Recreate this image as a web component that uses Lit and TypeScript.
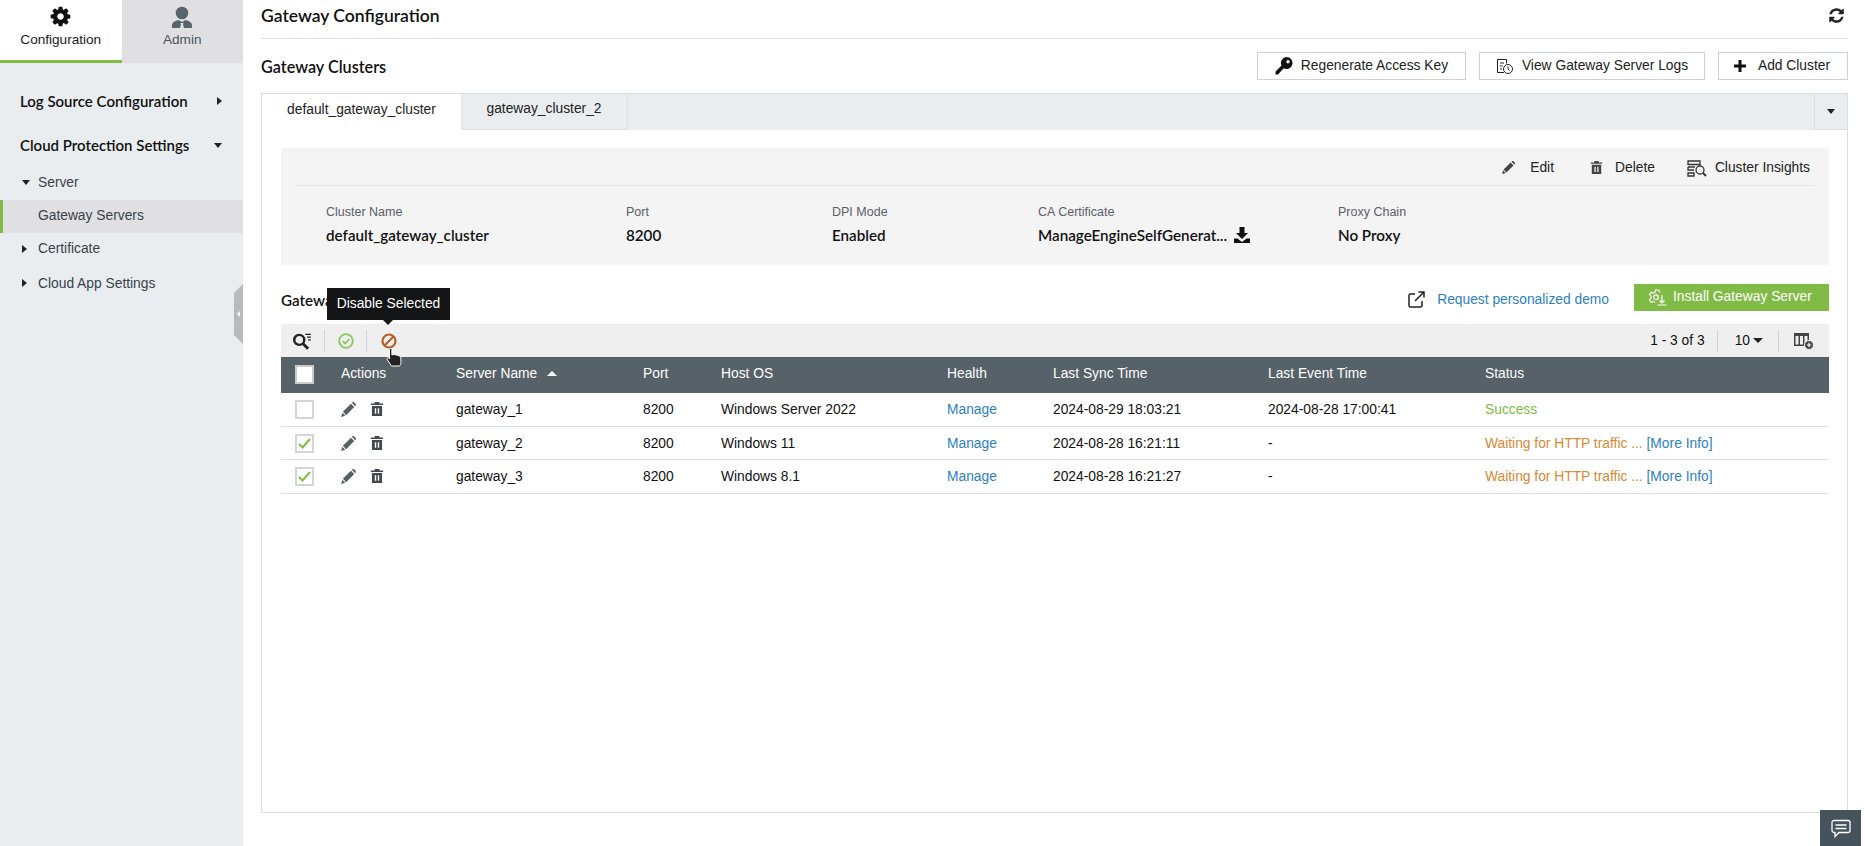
import { LitElement, html, css, svg } from "lit";
import { customElement } from "lit/decorators.js";

const cog = "M1152 896q0-106-75-181t-181-75-181 75-75 181 75 181 181 75 181-75 75-181zm512-109v222q0 12-8 23t-20 13l-185 28q-19 54-39 91 35 50 107 138 10 12 10 25t-9 23q-27 37-99 108t-94 71q-12 0-26-9l-138-108q-44 23-91 38-16 136-29 186-7 28-36 28h-222q-14 0-24.5-8.5t-11.5-21.5l-28-184q-49-16-90-37l-141 107q-10 9-25 9-14 0-25-11-126-114-165-168-7-10-7-23 0-12 8-23 15-21 51-66.5t54-70.5q-27-50-41-99l-183-27q-13-2-21-12.5t-8-23.5v-222q0-12 8-23t19-13l186-28q14-46 39-92-40-57-107-138-10-12-10-24 0-10 9-23 26-36 98.5-107.5t94.5-71.5q13 0 26 10l138 107q44-23 91-38 16-136 29-186 7-28 36-28h222q14 0 24.5 8.5t11.5 21.5l28 184q49 16 90 37l142-107q9-9 24-9 13 0 25 10 129 119 165 170 7 8 7 22 0 12-8 23-15 21-51 66.5t-54 70.5q26 50 41 98l183 28q13 2 21 12.5t8 23.5z";
const refresh = "M1639 1056q0 5-1 7-64 268-268 434.5t-478 166.5q-146 0-282.5-55t-243.5-157l-129 129q-19 19-45 19t-45-19-19-45v-448q0-26 19-45t45-19h448q26 0 45 19t19 45-19 45l-137 137q71 66 161 102t187 36q134 0 250-65t186-179q11-17 53-117 8-23 30-23h192q13 0 22.5 9.5t9.5 22.5zm25-800v448q0 26-19 45t-45 19h-448q-26 0-45-19t-19-45 19-45l138-138q-148-137-349-137-134 0-250 65t-186 179q-11 17-53 117-8 23-30 23h-199q-13 0-22.5-9.5t-9.5-22.5v-7q65-268 270-434.5t480-166.5q146 0 284 55.5t245 156.5l130-129q19-19 45-19t45 19 19 45z";

const pencil = (s: number, c: string) => svg`<svg width=${s} height=${s} viewBox="0 0 16 16" fill=${c}><path d="M10.6 1.9l3.5 3.5-8.6 8.6-3.5-3.5zM11.6.9l.9-.8a.9.9 0 0 1 1.2 0l2.2 2.2a.9.9 0 0 1 0 1.2l-.8.9zM1.3 11.4l3.3 3.3L.2 16z"/></svg>`;
const trash = (s: number, c: string) => svg`<svg width=${s} height=${s} viewBox="0 0 14 16" fill=${c}><path d="M4.6 0h4.8l.6 1.7H14v1.8H0V1.700h4zM1.200 4.600h11.600V16H1.200zM4.500 7v6.500h1.600V7zM7.900 7v6.500h1.600V7z" fill-rule="evenodd"/></svg>`;

@customElement("app-root")
export class AppRoot extends LitElement {
  static styles = css`
    :host { display: block; height: 846px; overflow: hidden; position: relative; background: #fff;
      font-family: "Liberation Sans", Arial, sans-serif; font-size: 13.800px; color: #111; }
    * { box-sizing: border-box; }
    .page { display: flex; height: 846px; }
    .side { width: 243px; flex: none; background: #eaedef; position: relative; }
    .toptabs { display: flex; height: 63px; }
    .toptab { width: 121.500px; background: #e0e0e2; color: #4a5560; display: flex; flex-direction: column; align-items: center; padding-top: 5px; font-size: 13.600px; }
    .toptab.on { background: #fff; color: #1b1b1b; border-bottom: 3px solid #80bb46; }
    .toptab svg { display: block; height: 23px; margin-bottom: 4px; }
    .menu { padding-top: 16px; color: #37424c; }
    .mh { font: 600 15px Lato, sans-serif; color: #111; height: 44px; display: flex; align-items: center; padding: 0 20px; justify-content: space-between; }
    .mh .car { margin-right: 1px; }
    .sub { height: 33px; display: flex; align-items: center; padding: 0 0 2px 22px; gap: 8px; }
    .sub.last { height: 34px; padding-bottom: 0; }
    .sub.act { padding-left: 35px; background: #e0e0e2; border-left: 3px solid #80bb46; }
    .tr { width: 0; height: 0; border-top: 4px solid transparent; border-bottom: 4px solid transparent; border-left: 5px solid #222; }
    .td { width: 0; height: 0; border-left: 4.500px solid transparent; border-right: 4.500px solid transparent; border-top: 5px solid #222; }
    .handle { position: absolute; right: 0; top: 284px; width: 9px; height: 60px; background: #b7babd; clip-path: polygon(0 9px, 100% 0, 100% 100%, 0 calc(100% - 9px)); }
    .handle::after { content: ""; position: absolute; left: 3px; top: 27px; border-top: 3px solid transparent; border-bottom: 3px solid transparent; border-right: 3px solid #fff; }

    .main { flex: 1; min-width: 0; padding: 0 17px 0 18px; display: flex; flex-direction: column; }
    .title { height: 39px; border-bottom: 1px solid #dcdfe1; display: flex; align-items: center; justify-content: space-between; padding-bottom: 8px; font: 600 17.500px Lato, sans-serif; color: #111; }
    .title svg { display: block; margin-right: 3px; }
    .clusters { height: 54px; display: flex; align-items: center; justify-content: space-between; font: 600 16.200px Lato, sans-serif; }
    .btns { display: flex; gap: 13px; }
    .btn { height: 28px; border: 1px solid #cfd2d4; background: #fff; font: 13.800px "Liberation Sans", sans-serif; display: flex; align-items: center; justify-content: center; color: #222; gap: 8px; padding-bottom: 2px; }
    .btn svg { position: relative; top: 1px; }
    .frame { height: 720px; border: 1px solid #dcdfe1; display: flex; flex-direction: column; }
    .tabs { height: 36px; flex: none; background: #eaedef; display: flex; }
    .tab { display: flex; align-items: center; justify-content: center; color: #222; padding-bottom: 6px; }
    .tab.on { width: 199px; background: #fff; }
    .tab.off { width: 167px; border-left: 2px solid #e4e7e9; border-right: 1px solid #dfe2e4; border-bottom: 1px solid #dfe2e4; padding-right: 2px; }
    .tabs .fill { flex: 1; }
    .tabs .dd { width: 33px; border-left: 1px solid #dcdfe1; border-bottom: 1px solid #dcdfe1; display: flex; align-items: center; justify-content: center; }
    .body { padding: 18px 18px 0 19px; flex: 1; }
    .panel { height: 117px; background: #f4f4f4; padding: 0 14px; }
    .pacts { height: 38px; border-bottom: 1px solid #e2e4e6; display: flex; justify-content: flex-end; align-items: center; gap: 32px; padding: 2px 5px 0 0; color: #222; }
    .pact { display: flex; align-items: center; gap: 15px; }
    .pact.edit { margin-right: 4px; }
    .pact.del { gap: 12px; }
    .pact.ins { gap: 8px; }
    .pgrid { display: grid; grid-template-columns: 300px 206px 206px 300px 1fr; padding: 18px 0 0 31px; }
    .lab { color: #5b6066; font-size: 12.500px; line-height: 16px; }
    .val { font: 600 15.200px/18px Lato, sans-serif; margin-top: 6px; color: #111; display: flex; align-items: center; gap: 7px; }
    .ghead { height: 59px; display: flex; align-items: center; justify-content: space-between; font: 600 15.200px Lato, sans-serif; padding-top: 10px; }
    .demo { display: flex; align-items: center; font: 13.800px "Liberation Sans", sans-serif; color: #2d7fc1; }
    .demo > svg { margin-right: 12px; }
    .install { width: 195px; height: 27px; background: #80bb46; color: #fff; display: flex; align-items: center; padding-left: 14px; margin-left: 25px; position: relative; top: -2px; padding-bottom: 3px; }
    .install svg { margin-right: 6px; position: relative; top: 1px; }
    .tools { height: 33px; background: #efefef; display: flex; align-items: center; }
    .sep { width: 1px; height: 22px; background: #d2d4d6; }
    .tl { display: flex; align-items: center; padding-left: 11px; flex: 1; }
    .tr2 { display: flex; align-items: center; }
    table { width: 100%; border-collapse: collapse; table-layout: fixed; }
    th { height: 36px; background: #566168; color: #fff; font-weight: 400; text-align: left; padding: 0 0 3px; }
    th .cb { position: relative; top: 1px; }
    td { height: 33.400px; border-bottom: 1px solid #e0e2e4; padding: 0; color: #111; }
    .cb { display: block; margin-left: 14px; width: 19px; height: 19px; border: 2px solid #d3d5d7; background: #fff; padding: 0; }
    th .cb { border-color: #c9ccce; }
    .acts { display: flex; gap: 14px; align-items: center; }
    a { color: #2d7fc1; text-decoration: none; }
    .ok { color: #80bb46; }
    .warn { color: #d58a35; }
    .up { display: inline-block; margin-left: 10px; vertical-align: 2px; width: 0; height: 0; border-left: 5px solid transparent; border-right: 5px solid transparent; border-bottom: 5px solid #fff; }
    .tip { position: absolute; left: 327px; top: 288px; width: 123px; height: 32px; background: #141517; color: #fff; display: flex; align-items: center; justify-content: center; padding-bottom: 1px; }
    .tip::after { content: ""; position: absolute; left: 56px; top: 32px; border-left: 5px solid transparent; border-right: 5px solid transparent; border-top: 5px solid #141517; }
    .hand { position: absolute; left: 386px; top: 348px; }
    .chat { position: absolute; left: 1820px; top: 810px; width: 41px; height: 36px; background: #44535c; display: flex; align-items: center; justify-content: center; }
  `;

  render() {
    const rows = [
      ["gateway_1", "Windows Server 2022", "2024-08-29 18:03:21", "2024-08-28 17:00:41", false, false],
      ["gateway_2", "Windows 11", "2024-08-28 16:21:11", "-", true, true],
      ["gateway_3", "Windows 8.1", "2024-08-28 16:21:27", "-", true, true],
    ] as const;
    return html`
      <div class="page">
        <aside class="side">
          <div class="toptabs">
            <div class="toptab on">
              <svg width="23" height="23" viewBox="0 0 1792 1792" fill="#111"><path d=${cog}/></svg>
              <span>Configuration</span>
            </div>
            <div class="toptab">
              <svg width="22" height="23" viewBox="0 0 22 23" fill="#58646c"><circle cx="11" cy="8" r="6.300"/><path d="M1 23v-2.500c0-3 2.500-4.500 6.500-5.500l3.500 2 3.500-2c4 1 6.500 2.500 6.500 5.500V23H13l-1-3.500 .6-1.500h-3.200l.6 1.500L9 23z"/></svg>
              <span>Admin</span>
            </div>
          </div>
          <div class="menu">
            <div class="mh"><span>Log Source Configuration</span><i class="tr car"></i></div>
            <div class="mh"><span>Cloud Protection Settings</span><i class="td car"></i></div>
            <div class="sub"><i class="td"></i><span>Server</span></div>
            <div class="sub act"><span>Gateway Servers</span></div>
            <div class="sub"><i class="tr"></i><span style="margin-left:3px">Certificate</span></div>
            <div class="sub last"><i class="tr"></i><span style="margin-left:3px">Cloud App Settings</span></div>
          </div>
          <div class="handle"></div>
        </aside>

        <main class="main">
          <div class="title">
            <span>Gateway Configuration</span>
            <svg width="17" height="17" viewBox="0 0 1792 1792" fill="#222"><path d=${refresh}/></svg>
          </div>
          <div class="clusters">
            <span>Gateway Clusters</span>
            <div class="btns">
              <div class="btn" style="width:209px">
                <svg width="18" height="18" viewBox="0 0 18 18" fill="#111"><path d="M11.500 0a6 6 0 1 1-2.800 11.300L3 17.500H0.500v-3l6-6A6 6 0 0 1 11.500 0zm1.500 3a1.700 1.700 0 1 0 0 3.400A1.700 1.700 0 0 0 13 3z" fill-rule="evenodd"/></svg>
                <span>Regenerate Access Key</span>
              </div>
              <div class="btn" style="width:226px">
                <svg width="18" height="17" viewBox="0 0 18 17" fill="none" stroke="#222" stroke-width="1"><path d="M8 14.500H1.500v-13h9v4"/><path d="M4 5h4M4 8h2.500M4 11h2"/><circle cx="12" cy="11" r="4.500"/><path d="M12 8.500V11l1.500 1.500"/></svg>
                <span>View Gateway Server Logs</span>
              </div>
              <div class="btn" style="width:130px;gap:12px;padding-right:2px">
                <svg width="12" height="12" viewBox="0 0 12 12" fill="#111"><path d="M4.500 0h3v4.500H12v3H7.500V12h-3V7.500H0v-3h4.500z"/></svg>
                <span>Add Cluster</span>
              </div>
            </div>
          </div>

          <div class="frame">
            <div class="tabs">
              <div class="tab on">default_gateway_cluster</div>
              <div class="tab off">gateway_cluster_2</div>
              <div class="fill"></div>
              <div class="dd"><i class="td"></i></div>
            </div>
            <div class="body">
              <section class="panel">
                <div class="pacts">
                  <div class="pact edit">${pencil(13, "#444")}<span>Edit</span></div>
                  <div class="pact del">${trash(13, "#444")}<span>Delete</span></div>
                  <div class="pact ins">
                    <svg width="20" height="18" viewBox="0 0 20 18" fill="none" stroke="#333" stroke-width="1.300"><path d="M1 2h12v3.500H1zM1 8h7M1 8v3h6M1 14h6v3H1z"/><circle cx="13" cy="11" r="4"/><path d="M16 14l3 3" stroke-width="2"/></svg>
                    <span>Cluster Insights</span>
                  </div>
                </div>
                <div class="pgrid">
                  <div><div class="lab">Cluster Name</div><div class="val">default_gateway_cluster</div></div>
                  <div><div class="lab">Port</div><div class="val">8200</div></div>
                  <div><div class="lab">DPI Mode</div><div class="val">Enabled</div></div>
                  <div><div class="lab">CA Certificate</div><div class="val">ManageEngineSelfGenerat...
                    <svg width="16" height="16" viewBox="0 0 16 16" fill="#111"><path d="M5.500 0h5v6h3.500L8 12 2 6h3.500zM0 11.500h3.500L8 15l4.500-3.500H16V16H0z"/></svg></div></div>
                  <div><div class="lab">Proxy Chain</div><div class="val">No Proxy</div></div>
                </div>
              </section>
              <div class="ghead">
                <span>Gateway Servers</span>
                <div class="demo">
                  <svg width="17" height="17" viewBox="0 0 17 17" fill="none" stroke="#222" stroke-width="1.500"><path d="M7 3H2.500A1.500 1.500 0 0 0 1 4.500v10A1.500 1.500 0 0 0 2.500 16h10a1.500 1.500 0 0 0 1.500-1.500V10"/><path d="M7 10l9-9M10.500 1H16v5.500"/></svg>
                  <span style="padding-bottom:1px">Request personalized demo</span>
                  <div class="install">
                    <svg width="19" height="17" viewBox="0 0 19 17" fill="none" stroke="#fff" stroke-width="1.200"><path d="M12 3.500 10.500 1h-3L7 3 5 4 3 3.200 1.500 5.700 3 7.200v2L1.500 10.700 3 13.200l2-.8 2 1.100"/><circle cx="8" cy="8.200" r="2.300"/><path d="M14 6v8M11.500 11.500L14 14l2.500-2.500M9.500 16h9"/></svg>
                    <span>Install Gateway Server</span>
                  </div>
                </div>
              </div>
              <div class="tools">
                <div class="tl">
                  <svg width="20" height="18" viewBox="0 0 18 16" fill="none" stroke="#222" stroke-width="2.200" style="margin-right:12px"><circle cx="6.500" cy="7" r="4.500"/><path d="M10 10.500l4.500 4.500" stroke-width="2.600"/><path d="M12 2h5M13.500 4.500h3.500M14.500 7h2.500" stroke-width="1"/></svg>
                  <div class="sep"></div>
                  <svg width="16" height="16" viewBox="0 0 16 16" fill="none" stroke="#8fc662" stroke-width="1.800" style="margin:0 12px 0 13px"><circle cx="8" cy="8" r="6.800"/><path d="M4.800 8.200l2.300 2.300 4.200-4.500"/></svg>
                  <div class="sep"></div>
                  <svg width="16" height="16" viewBox="0 0 16 16" fill="none" stroke="#b5602a" stroke-width="2.200" style="margin-left:14px"><circle cx="8" cy="8" r="6.500"/><path d="M3.500 12.500l9-9"/></svg>
                </div>
                <div class="tr2">
                  <span>1 - 3 of 3</span>
                  <div class="sep" style="margin-left:12px"></div>
                  <span style="margin-left:17px">10</span><i class="td" style="margin-left:3px;border-left-width:5px;border-right-width:5px"></i>
                  <div class="sep" style="margin-left:15px"></div>
                  <svg width="20" height="18" viewBox="0 0 20 18" style="margin:0 15px 0 15px" fill="#444"><path d="M0 1h15v13H0zM1.500 4v8.500h3V4zM6 4v8.500h3V4zM10.500 4v8.500h3V4z" fill-rule="evenodd"/><circle cx="15" cy="13" r="4.500" stroke="#efefef"/><path d="M12.800 12.400h4.400v1.200h-4.400zM14.400 10.800h1.200v4.400h-1.200z" fill="#fff"/></svg>
                </div>
              </div>
              <table>
                <colgroup><col style="width:60px"/><col style="width:115px"/><col style="width:187px"/><col style="width:78px"/><col style="width:226px"/><col style="width:106px"/><col style="width:215px"/><col style="width:217px"/><col/></colgroup>
                <thead><tr>
                  <th><span class="cb"></span></th><th>Actions</th><th>Server Name<i class="up"></i></th><th>Port</th><th>Host OS</th><th>Health</th><th>Last Sync Time</th><th>Last Event Time</th><th>Status</th>
                </tr></thead>
                <tbody>
                  ${rows.map((r) => html`<tr>
                    <td><span class="cb">${r[4] ? html`<svg width="15" height="15" viewBox="0 0 15 15" fill="none" stroke="#80bb46" stroke-width="2" style="display:block"><path d="M2 8l3.500 3.500L13 3"/></svg>` : ""}</span></td>
                    <td><div class="acts">${pencil(15, "#555f66")}${trash(14, "#3f4a52")}</div></td>
                    <td>${r[0]}</td><td>8200</td><td>${r[1]}</td><td><a>Manage</a></td><td>${r[2]}</td><td>${r[3]}</td>
                    <td>${r[5] ? html`<span class="warn">Waiting for HTTP traffic ...</span> <a>[More Info]</a>` : html`<span class="ok">Success</span>`}</td>
                  </tr>`)}
                </tbody>
              </table>
            </div>
          </div>
        </main>
      </div>
      <div class="tip">Disable Selected</div>
      <svg class="hand" width="16" height="20" viewBox="0 0 16 20" fill="#222" stroke="#fff" stroke-width="1"><path d="M3.500 1.500a1.200 1.200 0 0 1 2.400 0V7l1.500-.5 2 .3 2 .4 2 .8c1 .5 1.500 1.500 1.500 3v3.500c0 1.500-.5 2.500-1.500 3.500H5.500L1.500 12c-1-1-.5-2.500 1-2l1 .8z"/></svg>
      <div class="chat">
        <svg width="20" height="19" viewBox="0 0 20 19" fill="none" stroke="#fff" stroke-width="1.300"><path d="M3 1.500h14a2 2 0 0 1 2 2v8a2 2 0 0 1-2 2H8l-4 4v-4H3a2 2 0 0 1-2-2v-8a2 2 0 0 1 2-2z"/><path d="M4.500 6h11M4.500 9.500h11"/></svg>
      </div>
    `;
  }
}
